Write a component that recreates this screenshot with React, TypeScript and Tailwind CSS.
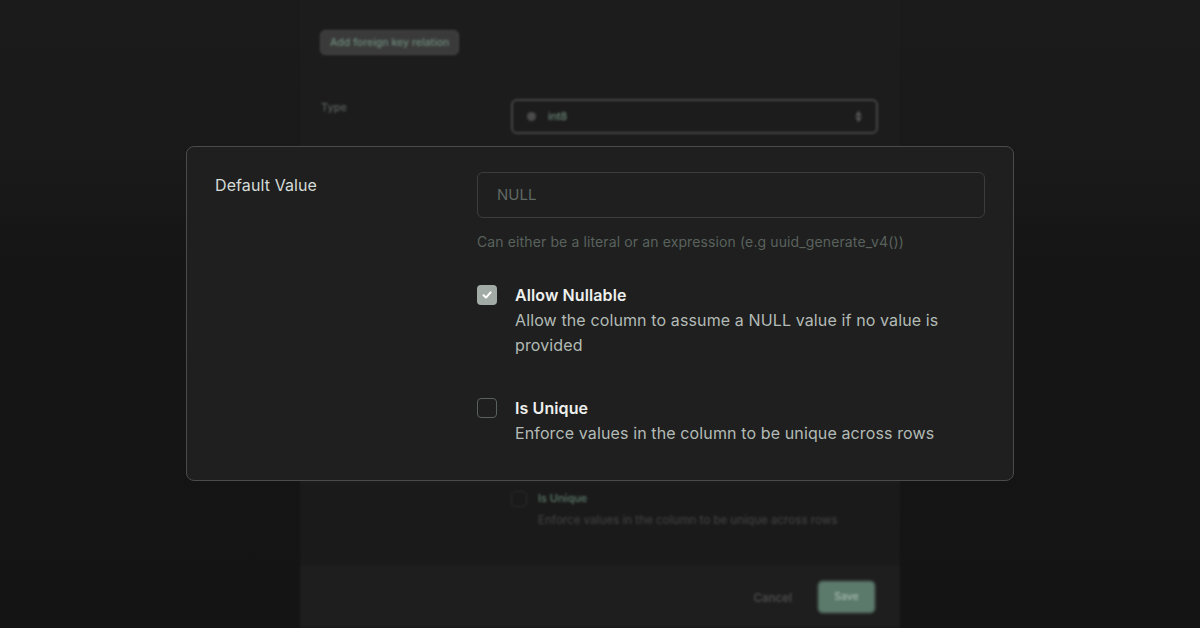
import React from "react";

const FONT = { fontFamily: "Inter, 'Noto Sans', sans-serif" };

function CheckRow({
  checked,
  title,
  description,
}: {
  checked: boolean;
  title: string;
  description: string;
}) {
  return (
    <div className="flex gap-[18px]">
      <div className="pt-[2px]">
        {checked ? (
          <div className="flex h-5 w-5 items-center justify-center rounded-[4px] bg-[#a3aba6]">
            <svg width="12" height="12" viewBox="0 0 12 12" fill="none">
              <path
                d="M2.5 6.3 L5 8.6 L9.6 3.4"
                stroke="#ffffff"
                strokeWidth="2"
                strokeLinecap="round"
                strokeLinejoin="round"
              />
            </svg>
          </div>
        ) : (
          <div className="h-5 w-5 rounded-[4px] border border-[#5a605d]" />
        )}
      </div>
      <div className="max-w-[470px]">
        <div className="text-[16px] font-semibold leading-[25px] tracking-[0.1px] text-[#eef0ee]">
          {title}
        </div>
        <div className="text-[16px] leading-[25px] tracking-[0.12px] text-[#b3bbb6]">
          {description}
        </div>
      </div>
    </div>
  );
}

function BackgroundPanel() {
  return (
    <div className="flex h-full w-[600px] flex-col bg-[#1c1c1c] blur-[1px]">
      <div className="px-5 pt-[28px]">
        <div className="inline-flex h-[25px] items-center rounded-[5px] border border-[#454545] bg-[#3a3a3a] px-[9px] text-[10.5px] font-medium text-[#6e8a7c]">
          Add foreign key relation
        </div>
      </div>
      <div className="mt-[44px] flex items-start pl-[21px] pr-[22px]">
        <div className="w-[190px] text-[11px] font-medium text-[#58625d]">Type</div>
        <div className="flex h-[35px] flex-1 items-center rounded-[6px] border-2 border-[#444] px-[14px]">
          <span className="h-[9px] w-[9px] rounded-full bg-[#4a4a4a]" />
          <span className="ml-[12px] text-[10.5px] font-medium text-[#6e8a7c]">int8</span>
          <span className="ml-auto flex flex-col items-center text-[7px] leading-[7px] text-[#555]">
            <span>▲</span>
            <span>▼</span>
          </span>
        </div>
      </div>
      <div className="mt-[350px] flex flex-1 flex-col bg-[#1a1a1a] pl-[211px]">
        <div className="flex items-center gap-[11px] pt-[6px]">
          <span className="h-[16px] w-[16px] rounded-[4px] border border-[#2b2b2b]" />
          <span className="text-[11px] font-medium text-[#5f7d6e]">Is Unique</span>
        </div>
        <div className="ml-[27px] mt-[5px] text-[11.5px] font-medium text-[#3f3f3f]">
          Enforce values in the column to be unique across rows
        </div>
      </div>
      <div className="flex h-[63px] items-start justify-end gap-[25px] bg-[#1e1e1e] pr-[24px] pt-[15px]">
        <span className="mt-[10px] text-[11.5px] font-semibold text-[#4b4b4b]">Cancel</span>
        <span className="flex h-[34px] w-[59px] items-center justify-center rounded-[6px] border-2 border-[#3e4d46] bg-[#5b7a6b] text-[10.5px] text-[#b2c2b9]">
          Save
        </span>
      </div>
    </div>
  );
}

export default function App() {
  return (
    <div
      style={FONT}
      className="relative flex h-[628px] w-[1200px] justify-center overflow-hidden bg-[linear-gradient(to_bottom,#1b1b1b_0%,#191919_28%,#151515_42%,#141414_100%)]"
    >
      <BackgroundPanel />

      <div className="absolute left-[186px] top-[146px] h-[335px] w-[828px] rounded-[8px] border-[1.5px] border-[#4b4b4b] bg-[#1f1f1f] px-[28px] pt-[25px]">
        <div className="flex">
          <div className="w-[262px] pt-[1px] text-[16px] leading-[24px] tracking-[0.1px] text-[#d5dcd8]">
            Default Value
          </div>
          <div className="flex-1">
            <div className="flex h-[46px] items-center rounded-[6px] border border-[#3c3c3c] px-[19px] text-[15px] text-[#5f6863]">
              NULL
            </div>
            <div className="mt-[14px] text-[14px] leading-[20px] tracking-[0.12px] text-[#59625d]">
              Can either be a literal or an expression (e.g uuid_generate_v4())
            </div>
            <div className="mt-[31px]">
              <CheckRow
                checked
                title="Allow Nullable"
                description="Allow the column to assume a NULL value if no value is provided"
              />
            </div>
            <div className="mt-[38px]">
              <CheckRow
                checked={false}
                title="Is Unique"
                description="Enforce values in the column to be unique across rows"
              />
            </div>
          </div>
        </div>
      </div>
    </div>
  );
}
